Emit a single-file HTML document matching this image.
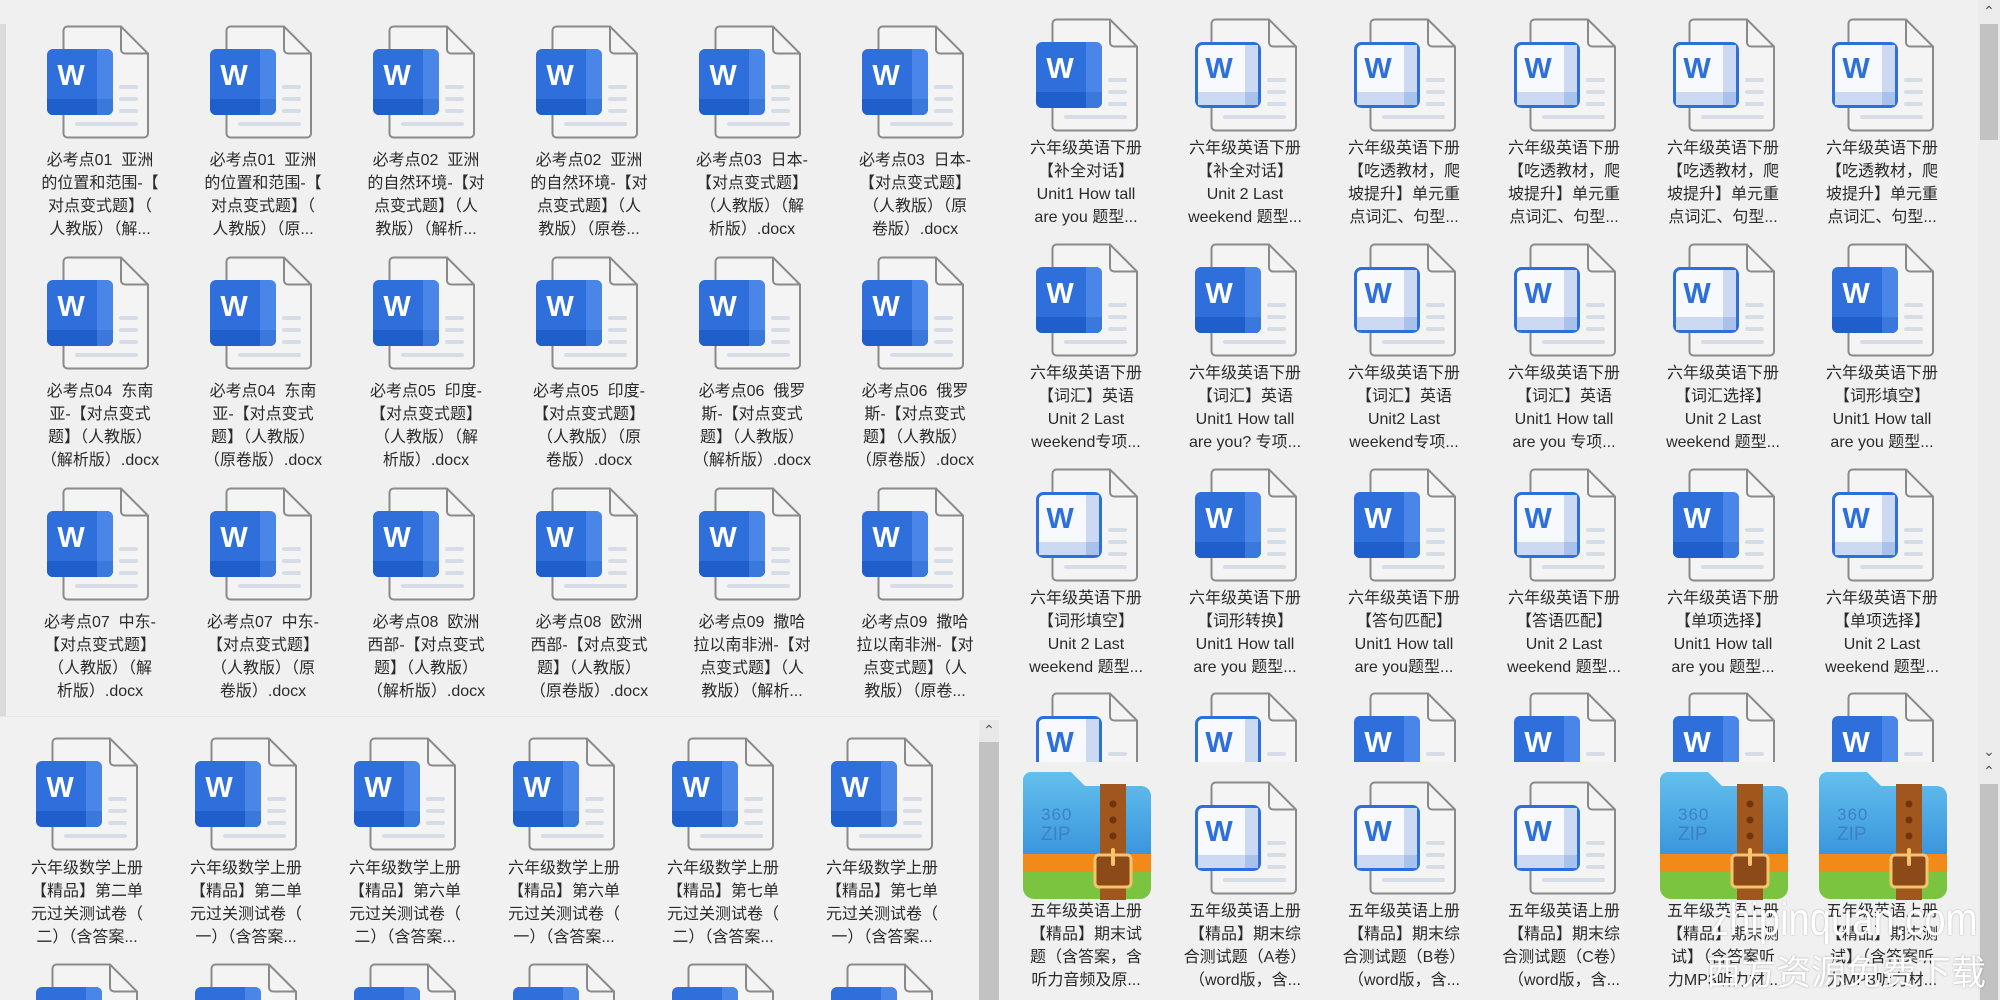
<!DOCTYPE html>
<html><head><meta charset="utf-8">
<style>
*{margin:0;padding:0;box-sizing:border-box}
html,body{width:2000px;height:1000px;overflow:hidden;background:#f0f0f0}
body{position:relative;font-family:"Liberation Sans","Noto Sans CJK SC",sans-serif;font-size:16px;color:#2a2a2a}
.i{position:absolute;width:102px;height:114px}
.z{position:absolute;width:128px;height:128px}
.t{position:absolute;width:170px;text-align:center;line-height:23px;white-space:nowrap;top:0}
.pan{position:absolute;overflow:hidden;background:#f0f0f0}
</style></head><body>
<svg width="0" height="0" style="position:absolute">
<defs>
<clipPath id="cb"><rect x="0" y="24" width="66" height="66" rx="6"/></clipPath>
<symbol id="pg" viewBox="0 0 102 114">
<path d="M20.5 1.5H74L101 28.5V108.5a4 4 0 0 1-4 4H20.5a4 4 0 0 1-4-4V5.5a4 4 0 0 1 4-4Z" fill="#f4f4f4" stroke="#8a8a8a" stroke-width="2"/>
<path d="M74 1.5V24.5a4 4 0 0 0 4 4H101" fill="none" stroke="#8a8a8a" stroke-width="2"/>
<rect x="72" y="60" width="19" height="4" rx="2" fill="#d7dde6"/>
<rect x="72" y="72" width="19" height="4" rx="2" fill="#d7dde6"/>
<rect x="72" y="84" width="19" height="4" rx="2" fill="#d7dde6"/>
<rect x="28" y="97" width="63" height="4" rx="2" fill="#d7dde6"/>
</symbol>
<symbol id="ws" viewBox="0 0 102 114">
<use href="#pg"/>
<g clip-path="url(#cb)">
<rect x="0" y="24" width="66" height="66" fill="#2f6fdc"/>
<rect x="50" y="24" width="16" height="66" fill="#4a86e8"/>
<rect x="0" y="74" width="66" height="16" fill="#1f5fcc"/>
<rect x="50" y="74" width="16" height="16" fill="#3a78dc"/>
</g>
<text x="24" y="60" font-family="Liberation Sans" font-weight="bold" font-size="29" fill="#fff" text-anchor="middle">W</text>
</symbol>
<symbol id="wo" viewBox="0 0 102 114">
<use href="#pg"/>
<rect x="1.5" y="25.5" width="63" height="63" rx="6" fill="#f7f9fd" stroke="#2d6fdb" stroke-width="3"/>
<rect x="50" y="27" width="13" height="60" fill="#cbd9f2"/>
<rect x="3" y="74" width="60" height="13" fill="#cbd9f2"/>
<rect x="50" y="74" width="13" height="13" fill="#a9c2ec"/>
<text x="24" y="60" font-family="Liberation Sans" font-weight="bold" font-size="29" fill="#2d6fdb" text-anchor="middle">W</text>
</symbol>
<linearGradient id="zg" x1="0" y1="0" x2="0" y2="1"><stop offset="0" stop-color="#63c0ec"/><stop offset="1" stop-color="#3791dc"/></linearGradient>
<symbol id="zip" viewBox="0 0 128 128">
<path d="M8 0H48L62 14H118a10 10 0 0 1 10 10V90H0V8a8 8 0 0 1 8-8Z" fill="url(#zg)"/>
<rect x="0" y="82" width="128" height="22" fill="#f28a1a"/>
<path d="M0 100H128V116a11 11 0 0 1-11 11H11a11 11 0 0 1-11-11Z" fill="#7bc43f"/>
<rect x="77" y="12" width="26" height="116" fill="#a0561c"/>
<circle cx="90" cy="32" r="3.5" fill="#6e340e"/><circle cx="90" cy="48" r="3.5" fill="#6e340e"/><circle cx="90" cy="64" r="3.5" fill="#6e340e"/>
<rect x="72" y="83" width="36" height="32" rx="4" fill="#8b4a17" stroke="#f5c46c" stroke-width="3"/>
<rect x="88" y="76" width="4" height="18" rx="2" fill="#f5c46c"/>
<text x="18" y="48" font-family="Liberation Sans" font-size="17" fill="#3b82c4" letter-spacing="1">360</text>
<text x="18" y="68" font-family="Liberation Sans" font-size="19" fill="#3b82c4">ZIP</text>
</symbol>
</defs></svg>

<!-- TOP LEFT PANEL -->
<div class="pan" style="left:0;top:0;width:1000px;height:716px">
<div style="position:absolute;left:0;top:24px;width:6px;height:692px;background:#dadada"></div>
<svg class="i" style="left:47px;top:25px"><use href="#ws"/></svg>
<svg class="i" style="left:210px;top:25px"><use href="#ws"/></svg>
<svg class="i" style="left:373px;top:25px"><use href="#ws"/></svg>
<svg class="i" style="left:536px;top:25px"><use href="#ws"/></svg>
<svg class="i" style="left:699px;top:25px"><use href="#ws"/></svg>
<svg class="i" style="left:862px;top:25px"><use href="#ws"/></svg>
<div class="t" style="left:15px;top:149px">必考点01&nbsp;&nbsp;亚洲<br>的位置和范围-【<br>对点变式题】（<br>人教版）（解...</div>
<div class="t" style="left:178px;top:149px">必考点01&nbsp;&nbsp;亚洲<br>的位置和范围-【<br>对点变式题】（<br>人教版）（原...</div>
<div class="t" style="left:341px;top:149px">必考点02&nbsp;&nbsp;亚洲<br>的自然环境-【对<br>点变式题】（人<br>教版）（解析...</div>
<div class="t" style="left:504px;top:149px">必考点02&nbsp;&nbsp;亚洲<br>的自然环境-【对<br>点变式题】（人<br>教版）（原卷...</div>
<div class="t" style="left:667px;top:149px">必考点03&nbsp;&nbsp;日本-<br>【对点变式题】<br>（人教版）（解<br>析版）.docx</div>
<div class="t" style="left:830px;top:149px">必考点03&nbsp;&nbsp;日本-<br>【对点变式题】<br>（人教版）（原<br>卷版）.docx</div>

<svg class="i" style="left:47px;top:256px"><use href="#ws"/></svg>
<svg class="i" style="left:210px;top:256px"><use href="#ws"/></svg>
<svg class="i" style="left:373px;top:256px"><use href="#ws"/></svg>
<svg class="i" style="left:536px;top:256px"><use href="#ws"/></svg>
<svg class="i" style="left:699px;top:256px"><use href="#ws"/></svg>
<svg class="i" style="left:862px;top:256px"><use href="#ws"/></svg>
<div class="t" style="left:15px;top:380px">必考点04&nbsp;&nbsp;东南<br>亚-【对点变式<br>题】（人教版）<br>（解析版）.docx</div>
<div class="t" style="left:178px;top:380px">必考点04&nbsp;&nbsp;东南<br>亚-【对点变式<br>题】（人教版）<br>（原卷版）.docx</div>
<div class="t" style="left:341px;top:380px">必考点05&nbsp;&nbsp;印度-<br>【对点变式题】<br>（人教版）（解<br>析版）.docx</div>
<div class="t" style="left:504px;top:380px">必考点05&nbsp;&nbsp;印度-<br>【对点变式题】<br>（人教版）（原<br>卷版）.docx</div>
<div class="t" style="left:667px;top:380px">必考点06&nbsp;&nbsp;俄罗<br>斯-【对点变式<br>题】（人教版）<br>（解析版）.docx</div>
<div class="t" style="left:830px;top:380px">必考点06&nbsp;&nbsp;俄罗<br>斯-【对点变式<br>题】（人教版）<br>（原卷版）.docx</div>

<svg class="i" style="left:47px;top:487px"><use href="#ws"/></svg>
<svg class="i" style="left:210px;top:487px"><use href="#ws"/></svg>
<svg class="i" style="left:373px;top:487px"><use href="#ws"/></svg>
<svg class="i" style="left:536px;top:487px"><use href="#ws"/></svg>
<svg class="i" style="left:699px;top:487px"><use href="#ws"/></svg>
<svg class="i" style="left:862px;top:487px"><use href="#ws"/></svg>
<div class="t" style="left:15px;top:611px">必考点07&nbsp;&nbsp;中东-<br>【对点变式题】<br>（人教版）（解<br>析版）.docx</div>
<div class="t" style="left:178px;top:611px">必考点07&nbsp;&nbsp;中东-<br>【对点变式题】<br>（人教版）（原<br>卷版）.docx</div>
<div class="t" style="left:341px;top:611px">必考点08&nbsp;&nbsp;欧洲<br>西部-【对点变式<br>题】（人教版）<br>（解析版）.docx</div>
<div class="t" style="left:504px;top:611px">必考点08&nbsp;&nbsp;欧洲<br>西部-【对点变式<br>题】（人教版）<br>（原卷版）.docx</div>
<div class="t" style="left:667px;top:611px">必考点09&nbsp;&nbsp;撒哈<br>拉以南非洲-【对<br>点变式题】（人<br>教版）（解析...</div>
<div class="t" style="left:830px;top:611px">必考点09&nbsp;&nbsp;撒哈<br>拉以南非洲-【对<br>点变式题】（人<br>教版）（原卷...</div>
</div>

<!-- BOTTOM LEFT PANEL -->
<div class="pan" style="left:0;top:716px;width:1000px;height:284px;background:#f1f1f1;border-top:1px solid #e6e6e6">
<svg class="i" style="left:36px;top:20px"><use href="#ws"/></svg>
<svg class="i" style="left:195px;top:20px"><use href="#ws"/></svg>
<svg class="i" style="left:354px;top:20px"><use href="#ws"/></svg>
<svg class="i" style="left:513px;top:20px"><use href="#ws"/></svg>
<svg class="i" style="left:672px;top:20px"><use href="#ws"/></svg>
<svg class="i" style="left:831px;top:20px"><use href="#ws"/></svg>
<div class="t" style="left:2px;top:140px">六年级数学上册<br>【精品】第二单<br>元过关测试卷（<br>二）（含答案...</div>
<div class="t" style="left:161px;top:140px">六年级数学上册<br>【精品】第二单<br>元过关测试卷（<br>一）（含答案...</div>
<div class="t" style="left:320px;top:140px">六年级数学上册<br>【精品】第六单<br>元过关测试卷（<br>二）（含答案...</div>
<div class="t" style="left:479px;top:140px">六年级数学上册<br>【精品】第六单<br>元过关测试卷（<br>一）（含答案...</div>
<div class="t" style="left:638px;top:140px">六年级数学上册<br>【精品】第七单<br>元过关测试卷（<br>二）（含答案...</div>
<div class="t" style="left:797px;top:140px">六年级数学上册<br>【精品】第七单<br>元过关测试卷（<br>一）（含答案...</div>
<svg class="i" style="left:36px;top:246px"><use href="#ws"/></svg>
<svg class="i" style="left:195px;top:246px"><use href="#ws"/></svg>
<svg class="i" style="left:354px;top:246px"><use href="#ws"/></svg>
<svg class="i" style="left:513px;top:246px"><use href="#ws"/></svg>
<svg class="i" style="left:672px;top:246px"><use href="#ws"/></svg>
<svg class="i" style="left:831px;top:246px"><use href="#ws"/></svg>
<div style="position:absolute;left:979px;top:3px;width:20px;height:281px;background:#e8e8e8"></div>
<div style="position:absolute;left:979px;top:25px;width:20px;height:259px;background:#c2c2c2"></div>
<div style="position:absolute;left:979px;top:4px;width:20px;text-align:center;font-size:14px;color:#555;line-height:18px">&#8963;</div>
</div>

<!-- RIGHT PANEL -->
<div class="pan" style="left:1000px;top:0;width:1000px;height:762px">
<svg class="i" style="left:36px;top:18px"><use href="#ws"/></svg>
<svg class="i" style="left:195px;top:18px"><use href="#wo"/></svg>
<svg class="i" style="left:354px;top:18px"><use href="#wo"/></svg>
<svg class="i" style="left:514px;top:18px"><use href="#wo"/></svg>
<svg class="i" style="left:673px;top:18px"><use href="#wo"/></svg>
<svg class="i" style="left:832px;top:18px"><use href="#wo"/></svg>
<div class="t" style="left:1px;top:137px">六年级英语下册<br>【补全对话】<br>Unit1 How tall<br>are you 题型...</div>
<div class="t" style="left:160px;top:137px">六年级英语下册<br>【补全对话】<br>Unit 2 Last<br>weekend 题型...</div>
<div class="t" style="left:319px;top:137px">六年级英语下册<br>【吃透教材，爬<br>坡提升】单元重<br>点词汇、句型...</div>
<div class="t" style="left:479px;top:137px">六年级英语下册<br>【吃透教材，爬<br>坡提升】单元重<br>点词汇、句型...</div>
<div class="t" style="left:638px;top:137px">六年级英语下册<br>【吃透教材，爬<br>坡提升】单元重<br>点词汇、句型...</div>
<div class="t" style="left:797px;top:137px">六年级英语下册<br>【吃透教材，爬<br>坡提升】单元重<br>点词汇、句型...</div>

<svg class="i" style="left:36px;top:243px"><use href="#ws"/></svg>
<svg class="i" style="left:195px;top:243px"><use href="#ws"/></svg>
<svg class="i" style="left:354px;top:243px"><use href="#wo"/></svg>
<svg class="i" style="left:514px;top:243px"><use href="#wo"/></svg>
<svg class="i" style="left:673px;top:243px"><use href="#wo"/></svg>
<svg class="i" style="left:832px;top:243px"><use href="#ws"/></svg>
<div class="t" style="left:1px;top:362px">六年级英语下册<br>【词汇】英语<br>Unit 2 Last<br>weekend专项...</div>
<div class="t" style="left:160px;top:362px">六年级英语下册<br>【词汇】英语<br>Unit1 How tall<br>are you? 专项...</div>
<div class="t" style="left:319px;top:362px">六年级英语下册<br>【词汇】英语<br>Unit2 Last<br>weekend专项...</div>
<div class="t" style="left:479px;top:362px">六年级英语下册<br>【词汇】英语<br>Unit1 How tall<br>are you 专项...</div>
<div class="t" style="left:638px;top:362px">六年级英语下册<br>【词汇选择】<br>Unit 2 Last<br>weekend 题型...</div>
<div class="t" style="left:797px;top:362px">六年级英语下册<br>【词形填空】<br>Unit1 How tall<br>are you 题型...</div>

<svg class="i" style="left:36px;top:468px"><use href="#wo"/></svg>
<svg class="i" style="left:195px;top:468px"><use href="#ws"/></svg>
<svg class="i" style="left:354px;top:468px"><use href="#ws"/></svg>
<svg class="i" style="left:514px;top:468px"><use href="#wo"/></svg>
<svg class="i" style="left:673px;top:468px"><use href="#ws"/></svg>
<svg class="i" style="left:832px;top:468px"><use href="#wo"/></svg>
<div class="t" style="left:1px;top:587px">六年级英语下册<br>【词形填空】<br>Unit 2 Last<br>weekend 题型...</div>
<div class="t" style="left:160px;top:587px">六年级英语下册<br>【词形转换】<br>Unit1 How tall<br>are you 题型...</div>
<div class="t" style="left:319px;top:587px">六年级英语下册<br>【答句匹配】<br>Unit1 How tall<br>are you题型...</div>
<div class="t" style="left:479px;top:587px">六年级英语下册<br>【答语匹配】<br>Unit 2 Last<br>weekend 题型...</div>
<div class="t" style="left:638px;top:587px">六年级英语下册<br>【单项选择】<br>Unit1 How tall<br>are you 题型...</div>
<div class="t" style="left:797px;top:587px">六年级英语下册<br>【单项选择】<br>Unit 2 Last<br>weekend 题型...</div>

<svg class="i" style="left:36px;top:692px"><use href="#wo"/></svg>
<svg class="i" style="left:195px;top:692px"><use href="#wo"/></svg>
<svg class="i" style="left:354px;top:692px"><use href="#ws"/></svg>
<svg class="i" style="left:514px;top:692px"><use href="#ws"/></svg>
<svg class="i" style="left:673px;top:692px"><use href="#ws"/></svg>
<svg class="i" style="left:832px;top:692px"><use href="#ws"/></svg>

<div style="position:absolute;left:978px;top:0;width:22px;height:762px;background:#ececec"></div>
<div style="position:absolute;left:980px;top:24px;width:18px;height:116px;background:#c2c2c2"></div>
<div style="position:absolute;left:978px;top:2px;width:22px;text-align:center;font-size:14px;color:#555;line-height:18px">&#8963;</div>
<div style="position:absolute;left:978px;top:742px;width:22px;text-align:center;font-size:14px;color:#555;line-height:18px">&#8964;</div>
</div>

<!-- RIGHT BOTTOM (zip window) -->
<div class="pan" style="left:1000px;top:762px;width:1000px;height:238px">
<svg class="z" style="left:23px;top:10px"><use href="#zip"/></svg>
<svg class="i" style="left:195px;top:19px"><use href="#wo"/></svg>
<svg class="i" style="left:354px;top:19px"><use href="#wo"/></svg>
<svg class="i" style="left:514px;top:19px"><use href="#wo"/></svg>
<svg class="z" style="left:660px;top:10px"><use href="#zip"/></svg>
<svg class="z" style="left:819px;top:10px"><use href="#zip"/></svg>
<div class="t" style="left:1px;top:138px">五年级英语上册<br>【精品】期末试<br>题（含答案，含<br>听力音频及原...</div>
<div class="t" style="left:160px;top:138px">五年级英语上册<br>【精品】期末综<br>合测试题（A卷）<br>（word版，含...</div>
<div class="t" style="left:319px;top:138px">五年级英语上册<br>【精品】期末综<br>合测试题（B卷）<br>（word版，含...</div>
<div class="t" style="left:479px;top:138px">五年级英语上册<br>【精品】期末综<br>合测试题（C卷）<br>（word版，含...</div>
<div class="t" style="left:638px;top:138px">五年级英语上册<br>【精品】期末测<br>试】（含答案听<br>力MP3听力材...</div>
<div class="t" style="left:797px;top:138px">五年级英语上册<br>【精品】期末测<br>试】（含答案听<br>力MP3听力材...</div>
<div style="position:absolute;left:978px;top:0;width:22px;height:238px;background:#ececec"></div>
<div style="position:absolute;left:980px;top:22px;width:18px;height:216px;background:#c2c2c2"></div>
<div style="position:absolute;left:978px;top:0;width:22px;text-align:center;font-size:14px;color:#555;line-height:18px">&#8963;</div>
</div>

<!-- watermark -->
<div style="position:absolute;left:1710px;top:893px;width:280px;height:52px;overflow:hidden">
<div style="font-family:'Liberation Sans',sans-serif;font-size:46px;color:#fff;line-height:52px;white-space:nowrap;transform:scaleX(0.83);transform-origin:0 0;text-shadow:0 0 2px rgba(0,0,0,.3)">zhipinquan.com</div>
</div>
<div style="position:absolute;left:1706px;top:950px;width:290px;height:50px;overflow:hidden;font-family:'Liberation Sans','Noto Sans CJK SC',sans-serif;font-size:35px;color:#fff;line-height:48px;white-space:nowrap;text-shadow:0 0 2px rgba(0,0,0,.3)">西方资源免费下载</div>
</body></html>
